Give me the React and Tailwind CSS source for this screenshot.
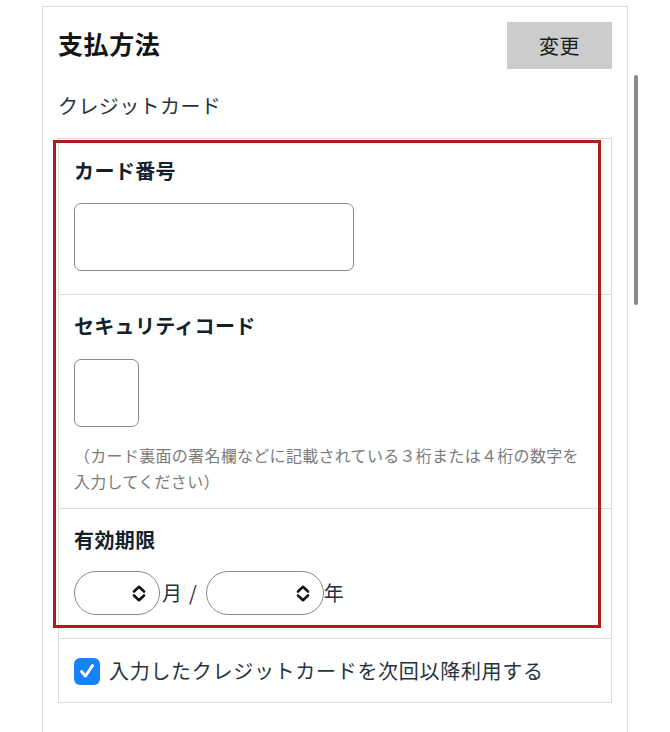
import React from "react";

function UpDown() {
  return (
    <svg width="16" height="17" viewBox="0 0 16 17" fill="none" stroke="#111" strokeWidth="2.6" strokeLinecap="round" strokeLinejoin="round">
      <path d="M3 6.5 L8 1.8 L13 6.5" />
      <path d="M3 10.5 L8 15.2 L13 10.5" />
    </svg>
  );
}

function Select({ width }) {
  return (
    <div className={`${width} h-[44px] rounded-full border border-[#8a8a8a] bg-white flex items-center justify-end pr-[12px]`}>
      <UpDown />
    </div>
  );
}

export default function App() {
  const font = { fontFamily: '"Noto Sans CJK JP", "Noto Sans", sans-serif' };

  return (
    <div className="relative w-[670px] h-[732px] bg-white overflow-hidden" style={font}>
      <div className="ml-[42px] mt-[6px] w-[586px] h-[800px] border border-[#dcdcdc] px-[15px] pt-[15px]">
        <div className="flex items-start justify-between">
          <h2 className="text-[25px] leading-[42px] font-bold text-[#151515] tracking-[0.6px]">支払方法</h2>
          <button className="w-[105px] h-[47px] bg-[#cccccc] text-[20px] text-[#1a1a1a] tracking-[0.5px]">変更</button>
        </div>
        <p className="mt-[23px] text-[20px] leading-[28px] text-[#26323c] tracking-[0.4px]">クレジットカード</p>

        <div className="mt-[18px] border border-[#dcdcdc]">
          <section className="pl-[15px] pt-[18px] pb-[23px] border-b border-[#dcdcdc]">
            <h3 className="text-[20px] leading-[28px] font-bold text-[#13212c] tracking-[0.4px]">カード番号</h3>
            <input
              type="text"
              className="mt-[18px] block w-[280px] h-[68px] rounded-[7px] border border-[#8a8a8a] bg-white"
            />
          </section>

          <section className="pl-[15px] pt-[17px] pb-[14px] border-b border-[#dcdcdc]">
            <h3 className="text-[20px] leading-[28px] font-bold text-[#13212c] tracking-[0.3px]">セキュリティコード</h3>
            <input
              type="text"
              className="mt-[19px] block w-[65px] h-[68px] rounded-[7px] border border-[#8a8a8a] bg-white"
            />
            <p className="mt-[15px] w-[517px] text-[16px] leading-[26px] text-[#7b7b7b] tracking-[0.3px]">
              （カード裏面の署名欄などに記載されている３桁または４桁の数字を入力してください）
            </p>
          </section>

          <section className="pl-[15px] pt-[17px] pb-[23px] border-b border-[#dcdcdc]">
            <h3 className="text-[20px] leading-[28px] font-bold text-[#13212c] tracking-[0.4px]">有効期限</h3>
            <div className="mt-[17px] flex items-center text-[20px] text-[#26323c]">
              <Select width="w-[86px]" />
              <span className="ml-[2px]">月</span>
              <span className="ml-[7px]">/</span>
              <span className="ml-[9px]">
                <Select width="w-[118px]" />
              </span>
              <span>年</span>
            </div>
          </section>

          <section className="pl-[15px] pt-[18px] pb-[17px] flex items-center gap-[9px]">
            <span className="w-[26px] h-[27px] rounded-[6px] bg-[#1683fb] flex items-center justify-center">
              <svg width="18" height="18" viewBox="0 0 18 18" fill="none" stroke="#fff" strokeWidth="3" strokeLinecap="round" strokeLinejoin="round">
                <path d="M3.5 9.5 L7.5 14 L14.5 3.5" />
              </svg>
            </span>
            <span className="text-[20px] leading-[28px] text-[#26323c] tracking-[0.7px]">入力したクレジットカードを次回以降利用する</span>
          </section>
        </div>
      </div>

      <div className="absolute left-[53px] top-[140px] w-[548px] h-[488px] border-[3px] border-[#b31b1b] pointer-events-none" />
      <div className="absolute left-[634px] top-[75px] w-[4px] h-[230px] rounded-full bg-[#8a8a8a]" />
    </div>
  );
}
